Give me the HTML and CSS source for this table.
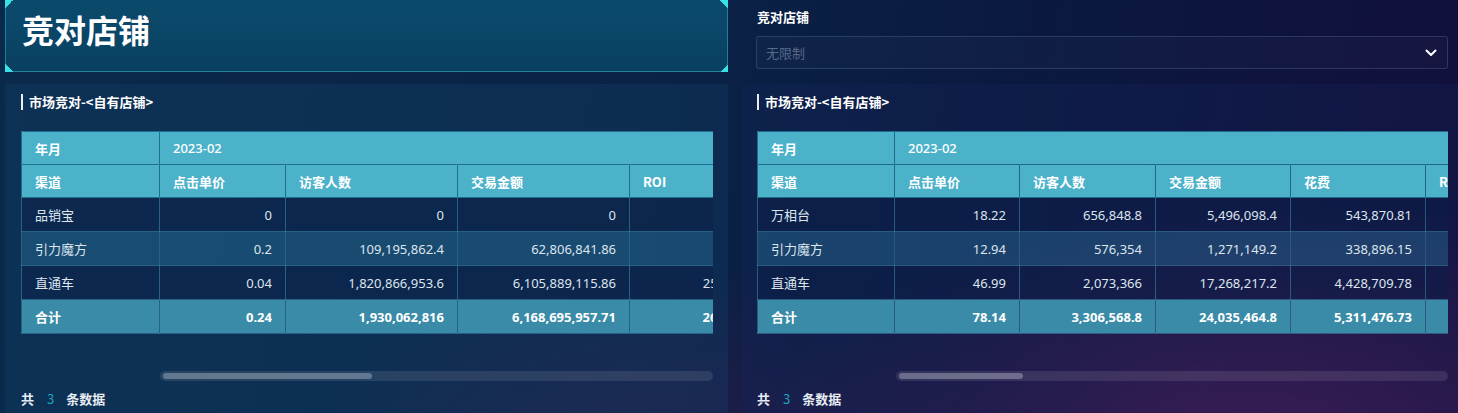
FILE: index.html
```html
<!DOCTYPE html>
<html lang="zh">
<head>
<meta charset="utf-8">
<link rel="stylesheet" href="styles.css">
</head>
<body>
<div class="page">
  <div class="col left">
    <div class="title-card">
      <span class="corner tl"></span><span class="corner tr"></span><span class="corner bl"></span><span class="corner br"></span>
      <h1 class="title">竞对店铺</h1>
    </div>
    <div class="card">
      <div class="sec-title">市场竞对-&lt;自有店铺&gt;</div>
      <div class="table-wrap">
        <table class="grid">
          <colgroup><col style="width:138px"><col style="width:126px"><col style="width:172px"><col style="width:172px"><col style="width:120px"></colgroup>
          <tr class="hd"><td>年月</td><td colspan="4">2023-02</td></tr>
          <tr class="hd"><td>渠道</td><td>点击单价</td><td>访客人数</td><td>交易金额</td><td>ROI</td></tr>
          <tr class="odd"><td>品销宝</td><td class="n">0</td><td class="n">0</td><td class="n">0</td><td class="n"></td></tr>
          <tr class="even"><td>引力魔方</td><td class="n">0.2</td><td class="n">109,195,862.4</td><td class="n">62,806,841.86</td><td class="n"></td></tr>
          <tr class="odd"><td>直通车</td><td class="n">0.04</td><td class="n">1,820,866,953.6</td><td class="n">6,105,889,115.86</td><td class="n">25.38</td></tr>
          <tr class="total"><td>合计</td><td class="n">0.24</td><td class="n">1,930,062,816</td><td class="n">6,168,695,957.71</td><td class="n">26.13</td></tr>
        </table>
      </div>
      <div class="scroll"><div class="thumb thumb-l"></div></div>
      <div class="foot">共<span class="cnt">3</span>条数据</div>
    </div>
  </div>
  <div class="col right">
    <div class="filter">
      <div class="f-label">竞对店铺</div>
      <div class="select"><span class="ph">无限制</span>
        <svg class="chev" width="14" height="14" viewBox="0 0 14 14"><path d="M2.5 4.5 L7 9 L11.5 4.5" fill="none" stroke="#fff" stroke-width="2" stroke-linecap="round" stroke-linejoin="round"/></svg>
      </div>
    </div>
    <div class="card card-r">
      <div class="sec-title">市场竞对-&lt;自有店铺&gt;</div>
      <div class="table-wrap">
        <table class="grid">
          <colgroup><col style="width:137px"><col style="width:125px"><col style="width:136px"><col style="width:135px"><col style="width:135px"><col style="width:120px"></colgroup>
          <tr class="hd"><td>年月</td><td colspan="5">2023-02</td></tr>
          <tr class="hd"><td>渠道</td><td>点击单价</td><td>访客人数</td><td>交易金额</td><td>花费</td><td>ROI</td></tr>
          <tr class="odd"><td>万相台</td><td class="n">18.22</td><td class="n">656,848.8</td><td class="n">5,496,098.4</td><td class="n">543,870.81</td><td class="n">10.11</td></tr>
          <tr class="even"><td>引力魔方</td><td class="n">12.94</td><td class="n">576,354</td><td class="n">1,271,149.2</td><td class="n">338,896.15</td><td class="n">3.75</td></tr>
          <tr class="odd"><td>直通车</td><td class="n">46.99</td><td class="n">2,073,366</td><td class="n">17,268,217.2</td><td class="n">4,428,709.78</td><td class="n">3.9</td></tr>
          <tr class="total"><td>合计</td><td class="n">78.14</td><td class="n">3,306,568.8</td><td class="n">24,035,464.8</td><td class="n">5,311,476.73</td><td class="n">4.53</td></tr>
        </table>
      </div>
      <div class="scroll"><div class="thumb thumb-r"></div></div>
      <div class="foot">共<span class="cnt">3</span>条数据</div>
    </div>
  </div>
</div>
</body>
</html>
```
FILE: styles.css
```css
* { box-sizing: border-box; }
html, body { margin: 0; padding: 0; }
body {
  width: 1458px; height: 413px; overflow: hidden;
  font-family: "Noto Sans", "Noto Sans CJK SC", sans-serif;
  color: #fff;
  background:
    radial-gradient(ellipse 700px 380px at 1250px 460px, rgba(92,28,88,0.75), rgba(92,28,88,0) 70%),
    radial-gradient(ellipse 500px 300px at 650px 470px, rgba(70,25,80,0.45), rgba(70,25,80,0) 70%),
    linear-gradient(100deg, #0a2a4c 0%, #0a2246 45%, #0b1840 70%, #120f3c 100%);
}
.page {
  display: grid;
  grid-template-columns: 723px 716px;
  column-gap: 14px;
  padding-left: 5px;
  height: 413px;
}
.col { display: flex; flex-direction: column; gap: 12px; }
.title-card {
  position: relative;
  height: 72px;
  border: 1px solid rgba(60,200,220,0.45);
  border-top: none;
  border-radius: 0 0 8px 8px;
  background: linear-gradient(180deg, #0b4a6b 0%, #0a4566 60%, #0a3f60 100%);
  display: flex; align-items: center;
  padding-left: 16px;
  padding-bottom: 14px;
}
.title {
  margin: 0;
  font-family: "Noto Sans CJK SC", sans-serif;
  font-size: 32px; font-weight: 700;
  line-height: 40px;
}
.corner { position: absolute; width: 8px; height: 8px; }
.corner.tl { left: -1px; top: 0; background: linear-gradient(135deg, #39e0e8 50%, transparent 50%); }
.corner.tr { right: -1px; top: 0; background: linear-gradient(225deg, #39e0e8 50%, transparent 50%); }
.corner.bl { left: -1px; bottom: -1px; background: linear-gradient(45deg, #39e0e8 50%, transparent 50%); }
.corner.br { right: -1px; bottom: -1px; background: linear-gradient(315deg, #39e0e8 50%, transparent 50%); }

.filter { height: 72px; padding: 9px 10px 0 14px; }
.f-label {
  font-family: "Noto Sans CJK SC", sans-serif;
  font-size: 13px; font-weight: 700; line-height: 16px;
  padding-left: 1px;
}
.select {
  margin-top: 11px;
  height: 33px;
  border: 1px solid rgba(110,135,180,0.28);
  border-radius: 3px;
  background: rgba(255,255,255,0.025);
  display: flex; align-items: center; justify-content: space-between;
  padding: 0 9px 0 9px;
}
.ph { font-family: "Noto Sans CJK SC", sans-serif; font-size: 13px; color: #56698a; }
.chev { display: block; }

.card {
  flex: 1;
  background: rgba(22,72,112,0.28);
  padding: 10px 15px 0 16px;
  display: flex; flex-direction: column;
}
.card-r { background: rgba(25,40,95,0.25); padding: 10px 10px 0 15px; }
.sec-title {
  font-family: "Noto Sans CJK SC", sans-serif;
  font-size: 13px; font-weight: 700; line-height: 16px;
  border-left: 2px solid #e8eef4;
  padding-left: 6px;
}
.table-wrap { margin-top: 21px; overflow: hidden; }
.grid {
  border-collapse: collapse;
  table-layout: fixed;
  font-size: 13px;
  white-space: nowrap;
  width: max-content;
}
.grid td {
  border: 1px solid rgba(60,140,175,0.55);
  padding: 0 13px 0 13px;
  overflow: hidden;
}
.grid tr.hd td {
  background: #4bb2ca;
  font-family: "Noto Sans CJK SC", sans-serif;
  font-weight: 700; color: #fff;
  height: 33px;
  border-color: rgba(40,140,170,0.7);
}
.grid tr.hd:first-child td + td { font-weight: 500; font-family: "Noto Sans", sans-serif; }
.grid tr.odd td { background: rgba(10,30,70,0.45); height: 34px; color: #dde5ee; }
.grid tr.even td { background: rgba(40,110,150,0.45); height: 34px; color: #dde5ee; }
.grid tr.total td { background: #3a8ba7; height: 34px; font-weight: 700; color: #fff; }
.grid td:first-child { font-family: "Noto Sans CJK SC", sans-serif; }
.grid td.n { text-align: right; }

.scroll {
  margin: 37px 0 0 139px;
  height: 10px;
  border-radius: 5px;
  background: rgba(255,255,255,0.1);
  padding: 2px 3px;
}
.thumb { height: 6px; border-radius: 3px; background: rgba(255,255,255,0.28); }
.thumb-l { width: 209px; }
.thumb-r { width: 124px; }
.foot {
  margin-top: 9px;
  font-family: "Noto Sans CJK SC", sans-serif;
  font-size: 13px; font-weight: 700; color: #e6ecf2;
  line-height: 18px;
}
.cnt { color: #1aa5bd; margin: 0 12px 0 13px; font-weight: 400; }
```
